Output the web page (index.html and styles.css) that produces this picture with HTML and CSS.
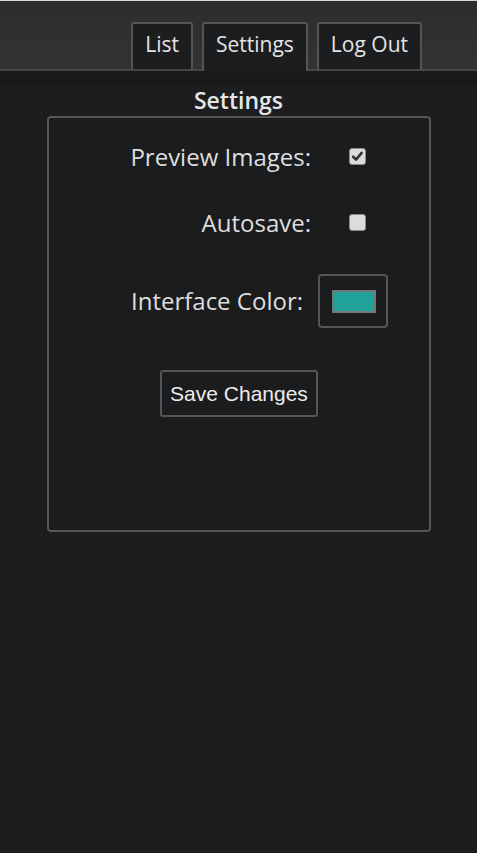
FILE: index.html
```html
<!DOCTYPE html>
<html lang="en">
<head>
<meta charset="utf-8">
<title>Settings</title>
<link rel="stylesheet" href="styles.css">
</head>
<body>
<header class="topbar">
  <nav class="tabs">
    <a class="tab" href="#">List</a>
    <a class="tab tab-active" href="#">Settings</a>
    <a class="tab" href="#">Log Out</a>
  </nav>
</header>
<main class="main">
  <h1 class="title">Settings</h1>
  <section class="card">
    <form class="form">
      <label class="label" for="preview">Preview Images:</label>
      <input class="check" type="checkbox" id="preview" checked>
      <label class="label" for="autosave">Autosave:</label>
      <input class="check" type="checkbox" id="autosave">
      <label class="label label-color" for="color">Interface Color:</label>
      <button class="color-btn" type="button" id="color"><span class="swatch"></span></button>
      <div class="actions">
        <button class="save" type="button">Save Changes</button>
      </div>
    </form>
  </section>
</main>
</body>
</html>
```

FILE: styles.css
```css
html, body {
  margin: 0;
  padding: 0;
}
body {
  background: #1c1d1f;
  color: #dedede;
  font-family: "Open Sans", "Noto Sans", sans-serif;
  min-height: 853px;
}
.topbar {
  height: 68px;
  border-top: 1px solid #d6d6d6;
  border-bottom: 2px solid #464748;
  background: linear-gradient(#2c2d2f, #323335);
  display: flex;
  justify-content: flex-end;
  align-items: flex-end;
  padding-right: 55px;
}
.tabs {
  display: flex;
  gap: 9px;
  align-items: flex-end;
}
.tab {
  display: block;
  box-sizing: border-box;
  height: 47px;
  padding: 5px 12px 0;
  border: 2px solid #545556;
  border-bottom: none;
  border-radius: 3px 3px 0 0;
  background: #1c1d1f;
  color: #e4e4e4;
  text-decoration: none;
  font-size: 21px;
  line-height: 30px;
}
.tab-active {
  height: 49px;
  margin-bottom: -2px;
}
.main {
  background: linear-gradient(#18191b 0, #18191b 12px, #1c1d1f 14px);
  padding-top: 14px;
  min-height: 700px;
}
.title {
  margin: 0 0 1px;
  text-align: center;
  font-size: 23px;
  line-height: 30px;
  font-weight: 600;
  color: #e6e6e6;
}
.card {
  margin: 0 46px 0 47px;
  height: 412px;
  border: 2px solid #555657;
  border-radius: 4px;
  background: #1b1c1e;
}
.form {
  display: grid;
  grid-template-columns: 262px auto;
  column-gap: 7px;
  row-gap: 36px;
  align-items: center;
  padding-top: 24px;
}
.label {
  justify-self: end;
  text-align: right;
  font-size: 24px;
  line-height: 30px;
  color: #dedede;
  white-space: nowrap;
}
.label-color {
  padding-right: 8px;
}
.check {
  -webkit-appearance: none;
  appearance: none;
  justify-self: start;
  margin: 0 0 0 31px;
  width: 17px;
  height: 17px;
  box-sizing: border-box;
  border: 1px solid #8a8a8a;
  border-radius: 3px;
  background: #dcdcdc;
  position: relative;
  top: -1px;
}
.check:checked {
  background: #dcdcdc url("data:image/svg+xml;utf8,<svg xmlns='http://www.w3.org/2000/svg' viewBox='0 0 17 17'><path d='M3.6 8.8 L6.8 12 L13.2 4.4' fill='none' stroke='%23333333' stroke-width='3' stroke-linecap='round' stroke-linejoin='round'/></svg>") no-repeat center / 15px 15px;
}
.color-btn {
  justify-self: start;
  box-sizing: border-box;
  width: 70px;
  height: 54px;
  padding: 14px 10px 13px 12px;
  border: 2px solid #545556;
  border-radius: 4px;
  background: #1b1c1e;
  display: flex;
  cursor: pointer;
}
.swatch {
  display: block;
  width: 44px;
  height: 23px;
  box-sizing: border-box;
  border: 2px solid #767676;
  background: #21a39a;
}
.actions {
  grid-column: 1 / -1;
  display: flex;
  justify-content: center;
  margin-top: 6px;
}
.save {
  box-sizing: border-box;
  height: 47px;
  padding: 0 8px;
  border: 2px solid #545556;
  border-radius: 3px;
  background: #1b1c1e;
  color: #ececec;
  font-family: "Liberation Sans", Arial, sans-serif;
  font-size: 21px;
  line-height: 43px;
  cursor: pointer;
}
```
